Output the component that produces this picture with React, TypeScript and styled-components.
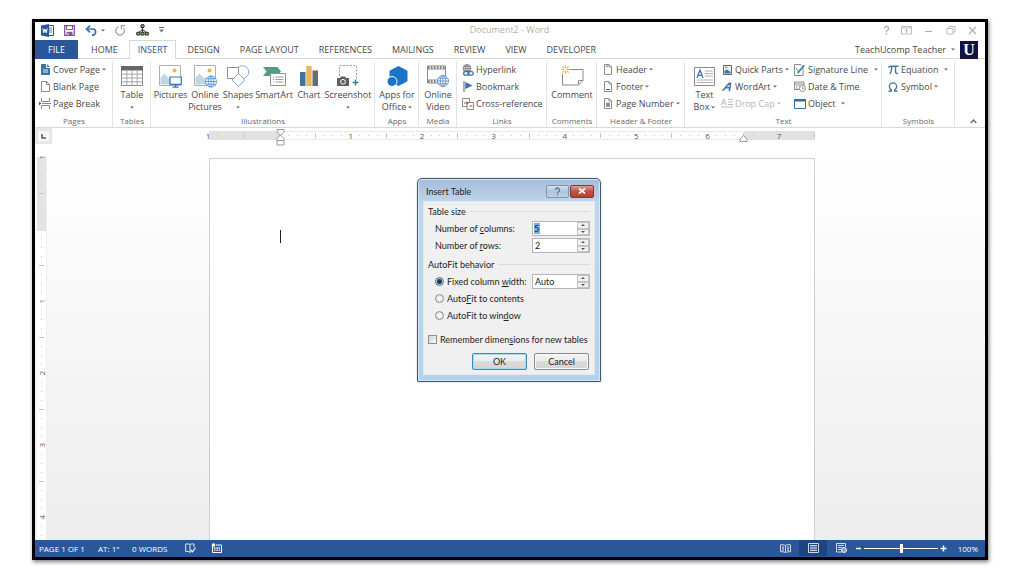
import React from "react";
import styled, { createGlobalStyle } from "styled-components";

const blue = "#2b579a";
const line = "#d8d8d8";
const ink = "#484848";

const Global = createGlobalStyle`
  *, *::before, *::after { box-sizing: border-box; }
  html, body { margin: 0; background: #fff; }
  body, button, input { font-family: "Open Sans", "Noto Sans", sans-serif; font-size: 9px; color: ${ink}; }
  button { border: 0; padding: 0; margin: 0; background: none; white-space: nowrap; }
  svg { display: block; flex: none; }
`;

/* ---------- window ---------- */

const Desk = styled.div`
  min-height: 100vh;
  padding: 19px 36px 16px 32px;
  display: flex;
`;

const Window = styled.div`
  position: relative;
  flex: 1;
  min-width: 0;
  display: flex;
  flex-direction: column;
  border: 3px solid #000;
  background: #fff;
  box-shadow: 1px 2px 4px rgba(0, 0, 0, 0.5);
`;

const TitleBar = styled.header`
  display: grid;
  grid-template-columns: 1fr auto 1fr;
  align-items: center;
  height: 18px;
  padding: 0 7px 2px 6px;
`;

const Title = styled.h1`
  margin: 0;
  font-size: 9px;
  font-weight: 400;
  line-height: 16px;
  color: #b0b0b0;
`;

const QuickAccess = styled.div`
  display: flex;
  align-items: center;
  gap: 10px;
`;

const WindowControls = styled.div`
  display: flex;
  align-items: center;
  justify-content: flex-end;
  gap: 11px;
`;

const IconButton = styled.button`
  display: flex;
  align-items: center;
  gap: 4px;
`;

/* ---------- tabs ---------- */

const TabRow = styled.nav`
  display: flex;
  align-items: stretch;
  height: 19px;
  box-shadow: inset 0 -1px ${line};
`;

const FileTab = styled.button`
  width: 43px;
  margin-right: 4px;
  background: ${blue};
  color: #fff;
  line-height: 17px;
`;

const Tab = styled.button<{ $active?: boolean }>`
  padding: 0 8px;
  margin-right: 2px;
  line-height: 16px;
  border: 1px solid ${(p) => (p.$active ? line : "transparent")};
  border-bottom: 0;
  background: ${(p) => (p.$active ? "#fff" : "none")};
  color: ${(p) => (p.$active ? blue : ink)};
`;

const Account = styled.button`
  display: flex;
  align-items: center;
  gap: 5px;
  margin-left: auto;
  padding-right: 7px;
`;

const Avatar = styled.span`
  display: grid;
  place-items: center;
  width: 18px;
  height: 18px;
  background: #12123f;
  color: #fff;
  font: 700 16px "Liberation Serif", serif;
`;

/* ---------- ribbon ---------- */

const Ribbon = styled.section`
  display: flex;
  height: 69px;
  border-bottom: 1px solid ${line};
`;

const GroupBox = styled.div<{ $w: number }>`
  flex: ${(p) => p.$w} 1 0;
  min-width: 0;
  display: flex;
  flex-direction: column;
  justify-content: space-between;
  margin: 2px 0 0;
  box-shadow: inset -1px 0 #e3e3e3;
`;

const GroupBody = styled.div<{ $center?: boolean; $pad?: number }>`
  display: flex;
  justify-content: ${(p) => (p.$center ? "center" : "flex-start")};
  padding-left: ${(p) => p.$pad ?? 0}px;
`;

const GroupLabel = styled.div`
  text-align: center;
  line-height: 12px;
  font-size: 8px;
  color: #6a6a6a;
  white-space: nowrap;
`;

const Big = styled.button<{ $w: number }>`
  width: ${(p) => p.$w}px;
  display: flex;
  flex-direction: column;
  align-items: center;
  line-height: 12px;
  padding-top: 2px;
`;

const BigIcon = styled.span`
  height: 26px;
  display: flex;
  align-items: center;
`;

const BigLine = styled.span`
  display: flex;
  align-items: center;
  gap: 2px;
  height: 12px;
`;

const Stack = styled.div<{ $w?: number }>`
  display: flex;
  flex-direction: column;
  width: ${(p) => (p.$w ? p.$w + "px" : "auto")};
`;

const Small = styled.button<{ $dim?: boolean }>`
  display: flex;
  align-items: center;
  height: 17px;
  color: ${(p) => (p.$dim ? "#b5b5b5" : ink)};
`;

const SmallIcon = styled.span`
  width: 12px;
  margin-right: 2px;
  display: flex;
  justify-content: center;
`;

const SmallText = styled.span<{ $gap?: number }>`
  margin-right: ${(p) => p.$gap ?? 2}px;
`;

const Collapse = styled.div`
  flex: 30 1 0;
  display: flex;
  align-items: flex-end;
  justify-content: center;
  button { margin: 0 0 3px 7px; }
`;

const Caret = ({ dim }: { dim?: boolean }) => (
  <svg width="4" height="3" viewBox="0 0 4 3" aria-hidden="true">
    <path d="M0 .4h4L2 2.6z" fill={dim ? "#b5b5b5" : "#666"} />
  </svg>
);

/* ---------- rulers and paper ---------- */

const RulerRow = styled.div`
  display: flex;
  height: 17px;
`;

const TabStop = styled.button`
  width: 17px;
  height: 16px;
  display: grid;
  place-items: center;
  border: 3px solid #e6e6e6;
  background: #f8f8f8;
`;

const RulerTrack = styled.div`
  flex: 1;
  display: flex;
  justify-content: center;
  padding-right: 14px;
`;

const HRuler = styled.div`
  position: relative;
  display: flex;
  width: 606px;
  height: 9px;
  margin-top: 3px;
`;

const HPart = styled.div<{ $w: number; $shade?: boolean }>`
  flex: ${(p) => p.$w} 1 0;
  background: ${(p) => (p.$shade ? "#e1e1e1" : "#fff")};
  border: solid #e8e8e8;
  border-width: ${(p) => (p.$shade ? 0 : "1px 0")};
`;

const HScale = styled.div`
  position: absolute;
  inset: 0 -5px;
  display: flex;
`;

const VScale = styled.div`
  position: absolute;
  inset: -4px 0 0;
  display: flex;
  flex-direction: column;
`;

const Mark = styled.span<{ $v?: boolean }>`
  flex: ${(p) => (p.$v ? "0 0 auto" : "1 1 0")};
  height: ${(p) => (p.$v ? "9px" : "auto")};
  width: auto;
  display: flex;
  align-items: center;
  justify-content: center;
  font-size: 8px;
  line-height: 9px;
  color: #555;
`;

const Turned = styled.span`
  writing-mode: vertical-rl;
  transform: rotate(180deg);
`;

const Dot = styled.i<{ $half?: boolean; $v?: boolean }>`
  width: ${(p) => (p.$v && p.$half ? 5 : 1)}px;
  height: ${(p) => (!p.$v && p.$half ? 5 : 1)}px;
  background: #c4c4c4;
`;

const Indent = styled.span<{ $x: number }>`
  position: absolute;
  left: ${(p) => p.$x}px;
  top: -2px;
`;

const Workspace = styled.main`
  flex: 1;
  display: flex;
  padding: 13px 0 0 2px;
  background: linear-gradient(#fff, #fcfcfc 18%, #ededed);
  overflow: hidden;
`;

const VRuler = styled.div`
  position: relative;
  width: 10px;
  margin-top: -1px;
  background: linear-gradient(#e4e4e4 74px, #fff 74px);
  border-right: 1px solid #eee;
`;

const PaperArea = styled.div`
  flex: 1;
  display: flex;
  justify-content: center;
  padding-right: 9px;
`;

const Paper = styled.article`
  width: 606px;
  padding: 71px 70px;
  background: #fff;
  border: solid #cfcfcf;
  border-width: 1px 1px 0;
`;

const Cursor = styled.div`
  width: 1px;
  height: 13px;
  background: #222;
`;

/* ---------- status bar ---------- */

const StatusBar = styled.footer`
  display: flex;
  align-items: center;
  height: 17px;
  padding: 0 7px 1px 4px;
  background: ${blue};
  color: #fff;
  font-size: 8px;
`;

const StatusText = styled.span<{ $w: number; $end?: boolean }>`
  min-width: ${(p) => p.$w}px;
  text-align: ${(p) => (p.$end ? "right" : "left")};
  white-space: nowrap;
`;

const StatusButton = styled.button<{ $on?: boolean }>`
  display: grid;
  place-items: center;
  width: 28px;
  height: 16px;
  background: ${(p) => (p.$on ? "#1e4580" : "none")};
`;

const StatusTools = styled.div`
  display: flex;
  gap: 0;
  button { width: 26px; }
`;

const ZoomTools = styled.div`
  display: flex;
  align-items: center;
  margin-left: auto;
`;

const ZoomSlider = styled.input`
  appearance: none;
  width: 74px;
  height: 9px;
  margin: 0 2px;
  background: linear-gradient(#fff, #fff) center / 100% 1px no-repeat;
  &::-webkit-slider-thumb {
    appearance: none;
    width: 3px;
    height: 9px;
    background: #fff;
  }
`;

/* ---------- dialog ---------- */

const Dialog = styled.form`
  position: absolute;
  top: 156px;
  left: 50%;
  transform: translateX(-50%);
  width: 184px;
  margin-left: -1px;
  padding: 0 5px 6px;
  border: 1px solid #3d5a6a;
  border-radius: 5px 5px 1px 1px;
  background: linear-gradient(#a3bcd9, #c2d6eb 24px, #bcd3e8 60%, #b4d3ea);
  box-shadow: inset 0 0 0 1px #d5e7f5, 0 0 2px rgba(0, 0, 0, 0.25);
  color: #222;
  font-family: Lato, "Open Sans", sans-serif;
  button, input, label { font-family: inherit; color: inherit; }
`;

const DialogTitle = styled.div`
  display: flex;
  align-items: center;
  height: 22px;
  padding: 2px 1px 0 3px;
  gap: 1px;
`;

const DialogName = styled.h2`
  flex: 1;
  margin: 0;
  font-size: 9px;
  font-weight: 400;
`;

const Caption = styled.button<{ $close?: boolean }>`
  display: grid;
  place-items: center;
  width: ${(p) => (p.$close ? 24 : 23)}px;
  height: 13px;
  border: 1px solid ${(p) => (p.$close ? "#7a3a3a" : "#7f96b0")};
  border-radius: 2px;
  background: ${(p) =>
    p.$close ? "linear-gradient(#dba196, #c3513f 50%, #b8402c)" : "linear-gradient(#d3e0ee, #b0c5dc 50%, #bdd0e4)"};
`;

const DialogBody = styled.div`
  background: #f0f0f0;
  border: 1px solid #dfe9f2;
  padding: 1px 4px 4px;
`;

const Section = styled.fieldset`
  border: 0;
  margin: 0 0 2px;
  padding: 0;
  min-width: 0;
`;

const Legend = styled.legend`
  display: flex;
  align-items: center;
  gap: 4px;
  width: 100%;
  padding: 0;
  height: 17px;
  &::after { content: ""; flex: 1; height: 1px; background: #dcdcdc; }
`;

const Field = styled.div`
  display: flex;
  align-items: center;
  height: 17px;
  padding-left: 7px;
`;

const FieldLabel = styled.label`
  flex: 1;
  white-space: nowrap;
`;

const Spin = styled.span`
  display: flex;
  width: 58px;
  height: 15px;
  border: 1px solid #b4b8bd;
  background: #fff;
`;

const SpinInput = styled.input`
  flex: 1;
  min-width: 0;
  border: 0;
  padding: 0 2px;
  background: none;
  outline: 0;
`;

const SelectedInput = styled(SpinInput)`
  flex: none;
  width: 6px;
  padding: 0;
  margin: 1px auto 1px 1px;
  background: #78b0e6;
`;

const SpinButtons = styled.span`
  display: flex;
  flex-direction: column;
  width: 12px;
  button {
    flex: 1;
    display: grid;
    place-items: center;
    border: 1px solid #c4c4c4;
    background: #f1f1f1;
  }
`;

const Radio = styled.input`
  appearance: none;
  width: 9px;
  height: 9px;
  margin: 0 3px 0 0;
  border: 1px solid #8e8f8f;
  border-radius: 50%;
  background: radial-gradient(#fff, #d5d5d5);
  &:checked {
    border-color: #4e6a80;
    background: radial-gradient(circle, #1c3c50 0 2px, #a9cfe0 3px, #e6eef2 4px);
  }
`;

const Check = styled.input`
  appearance: none;
  width: 9px;
  height: 9px;
  margin: 0 3px 0 0;
  border: 1px solid #8e8f8f;
  background: linear-gradient(135deg, #cfd3d8, #fafafa);
`;

const CheckRow = styled.div`
  display: flex;
  align-items: center;
  height: 17px;
  margin-top: 7px;
`;

const Actions = styled.div`
  display: flex;
  justify-content: flex-end;
  gap: 7px;
  margin: 5px 1px 0 0;
`;

const PushButton = styled.button<{ $primary?: boolean }>`
  width: 55px;
  height: 17px;
  border: 1px solid ${(p) => (p.$primary ? "#3c8db8" : "#8a8a8a")};
  border-radius: 2px;
  background: linear-gradient(#f4f4f4, #ebebeb 50%, #dcdcdc 50%, #d4d4d4);
  box-shadow: inset 0 0 0 1px ${(p) => (p.$primary ? "#a3dcf3" : "#f8f8f8")};
`;

/* ---------- icons ---------- */

const G = "#8a8a8a";
const B = "#3b6fae";

const Svg = ({ w, h = w, children }: { w: number; h?: number; children: React.ReactNode }) => (
  <svg width={w} height={h} viewBox={`0 0 ${w} ${h}`} fill="none" aria-hidden="true">
    {children}
  </svg>
);

const Globe = ({ x, y, r, c = "#4a8ccb" }: { x: number; y: number; r: number; c?: string }) => (
  <g stroke={c} strokeWidth="0.8">
    <circle cx={x} cy={y} r={r} fill="#fff" />
    <ellipse cx={x} cy={y} rx={r / 2} ry={r} />
    <path d={`M${x - r} ${y}h${2 * r}M${x} ${y - r}v${2 * r}M${x - r * 0.85} ${y - r / 2}h${r * 1.7}M${x - r * 0.85} ${y + r / 2}h${r * 1.7}`} />
  </g>
);

const WordLogo = () => (
  <Svg w={13}>
    <path d="M7 1.5h5.5v10H7z" fill="#fff" stroke={blue} />
    <path d="M8 4h3M8 6h3M8 8h3" stroke={blue} strokeWidth=".8" />
    <path d="M0 1.5 8 0v13l-8-1.500z" fill={blue} />
    <path d="m1.800 4.500 1 4.300L4 5l1.200 3.800 1-4.300" stroke="#fff" />
  </Svg>
);
const Save = () => (
  <Svg w={11}>
    <path d="M.7.7h9.600v9.600H.7z" stroke="#8a4f9e" strokeWidth="1.300" />
    <path d="M2.500 1v3.500h6V1" stroke="#8a4f9e" />
    <path d="M2.500 10V6.800h6V10z" fill="#8a4f9e" />
    <path d="M4 8v2" stroke="#fff" />
  </Svg>
);
const Undo = () => (
  <Svg w={12} h={11}>
    <path d="M1.500 4h6a3 3 0 0 1 0 6.200H7" stroke={B} strokeWidth="1.700" />
    <path d="M5 .7 1.500 4 5 7.300" stroke={B} strokeWidth="1.700" />
  </Svg>
);
const Redo = () => (
  <Svg w={11}>
    <path d="M3.500 1.700A4.300 4.300 0 1 0 8.500 3.200" stroke="#9a9a9a" strokeWidth="1.200" />
    <path d="M6 .6h4M6.300.8v3.700" stroke="#9a9a9a" strokeWidth="1.200" />
  </Svg>
);
const Org = () => (
  <Svg w={13} h={12}>
    <path d="M6.500 4v2M6.500 5.500 2.500 8.500M6.500 5.500l4 3M6.500 6v2.500" stroke="#333" />
    <path d="M5 .8h3v2.700H5zM.8 8.300h3V11h-3zM5 8.300h3V11H5zM9.300 8.300h3V11h-3z" fill="#9bbf6a" stroke="#222" />
  </Svg>
);
const Customize = () => (
  <Svg w={5} h={6}>
    <path d="M0 .5h5" stroke="#666" />
    <path d="M0 2.500h5L2.500 5.500z" fill="#777" />
  </Svg>
);

const CoverIcon = () => (
  <Svg w={9} h={11}>
    <path d="M.5.5h5.300L8.500 3v7.500h-8z" fill={B} stroke={B} />
    <path d="M5.500 0v3.500H9" stroke="#fff" />
    <path d="M2 6h5M2 8h5" stroke="#fff" strokeWidth=".9" />
  </Svg>
);
const BlankIcon = () => (
  <Svg w={9} h={11}>
    <path d="M.5.5h5l3 3v7h-8zM5.500.5v3h3" stroke={G} />
  </Svg>
);
const BreakIcon = () => (
  <Svg w={12} h={11}>
    <path d="M2.500 0v3.500h8V0M2.500 11V7.500h8V11M3 5.500h9" stroke={G} />
    <path d="m0 3.500 2.300 2L0 7.500z" fill="#555" />
  </Svg>
);
const TableIcon = () => (
  <Svg w={22} h={20}>
    <path d="M.5.500h21v19H.5z" fill="#fff" stroke={G} />
    <path d="M0 0h22v4.500H0z" fill="#666" />
    <path d="M.5 8.200h21M.5 12h21M.5 15.800h21M5.800 4v16M11 4v16M16.200 4v16" stroke="#a5a5a5" />
  </Svg>
);
const photo = (
  <>
    <path d="M.5.500h21v20H.5z" fill="#fff" stroke="#b0b0b0" />
    <circle cx="15.500" cy="5.500" r="2" fill="#e8b64c" />
    <path d="M1.500 19.500v-7l4-4 4.500 5 2-1.500v7.500z" fill="#bfd5e8" />
  </>
);
const PicturesIcon = () => (
  <Svg w={23} h={23}>
    {photo}
    <path d="M11 12h11.300v7.300H11z" fill="#fff" stroke={B} strokeWidth="1.200" />
    <path d="M16.600 19.500V22M13.500 22.200h6" stroke={B} strokeWidth="1.200" />
  </Svg>
);
const OnlinePicturesIcon = () => (
  <Svg w={23} h={23}>
    {photo}
    <Globe x={17} y={16.5} r={5.500} />
  </Svg>
);
const ShapesIcon = () => (
  <Svg w={23} h={23}>
    <circle cx="15.500" cy="7" r="6.300" fill="#fff" stroke="#8aa9cc" />
    <path d="M.5 2.500h11v11H.5z" fill="#fff" stroke="#909090" />
    <path d="m11.500 8.500 6.300 6.500-6.300 6.500L5.200 15z" fill="#fff" stroke="#7fa5cf" />
  </Svg>
);
const SmartArtIcon = () => (
  <Svg w={23} h={20}>
    <path d="M0 1h14.500l3.500 4.500-3.500 4.500H0l3.500-4.500z" fill="#4ea083" />
    <path d="M7.500 7.500h15v12h-15z" fill="#fff" stroke="#909090" />
    <path d="M10 11h1m1.500 0h8M10 13.500h1m1.500 0h8M10 16h1m1.500 0h8" stroke="#999" />
  </Svg>
);
const ChartIcon = () => (
  <Svg w={18} h={20}>
    <path d="M0 6h5.500v14H0z" fill="#44729f" />
    <path d="M6.200 0h5.500v20H6.200z" fill="#e6b665" />
    <path d="M12.500 4.500H18V20h-5.500z" fill="#6b6b6b" />
  </Svg>
);
const ScreenshotIcon = () => (
  <Svg w={22} h={22}>
    <path d="M2.500 11V.5h17V14" stroke="#9a9a9a" strokeDasharray="2 1.500" />
    <path d="M0 13h3l1-1.500h4L9 13h3v8H0z" fill="#5f5f5f" />
    <circle cx="6" cy="16.800" r="2.400" stroke="#fff" />
    <path d="M18.500 14.500v6M15.500 17.500h6" stroke="#2f8577" strokeWidth="1.500" />
  </Svg>
);
const AppsIcon = () => (
  <Svg w={21} h={21}>
    <path d="m11.500 0 9 4.800v10.400l-9 4.800-9-4.800V4.800z" fill="#1a74c8" />
    <circle cx="5" cy="15.500" r="5" fill="#1a74c8" stroke="#fff" />
  </Svg>
);
const VideoIcon = () => (
  <Svg w={22} h={22}>
    <path d="M.5 1h18v17H.5zM.5 4h18M.5 15h18" stroke={G} />
    <path d="M1 2.500h17.500M1 16.500h17.500" stroke="#666" strokeWidth="2" strokeDasharray="1.500 1.500" />
    <Globe x={16} y={16} r={5.500} />
  </Svg>
);
const LinkIcon = () => (
  <Svg w={12} h={12}>
    <Globe x={5} y={4.5} r={4} c="#777" />
    <rect x="1.600" y="7.600" width="5.500" height="3.600" rx="1.800" stroke={B} strokeWidth="1.300" fill="#fff" />
    <rect x="5.800" y="7.600" width="5.500" height="3.600" rx="1.800" stroke={B} strokeWidth="1.300" />
  </Svg>
);
const FlagIcon = () => (
  <Svg w={10} h={11}>
    <path d="M1 0v11" stroke="#777" strokeWidth="1.200" />
    <path d="M2.300 1 9.500 4.500 2.300 8z" fill={B} />
  </Svg>
);
const CrossIcon = () => (
  <Svg w={12} h={12}>
    <path d="M.5.5h7v8h-7z" fill="#fff" stroke="#888" />
    <path d="M5 4.500h6.500v7H5z" fill="#fff" stroke="#888" />
    <path d="M2 5h4M4.500 3.500 6.200 5 4.500 6.500M7.500 8h3" stroke="#a8484f" />
  </Svg>
);
const CommentIcon = () => (
  <Svg w={23} h={22}>
    <path d="M8 4.500h14v11L17.500 20H1.500V9" stroke="#8a8a8a" />
    <path d="M22 15.500h-4.500V20" stroke="#8a8a8a" />
    <path d="M4.500 0v9M0 4.500h9M1.300 1.300l6.400 6.400M7.700 1.300 1.300 7.700" stroke="#e9b558" strokeWidth="1.200" />
    <circle cx="4.500" cy="4.500" r="1.500" fill="#fff" />
  </Svg>
);
const HfIcon = ({ kind }: { kind: "h" | "f" | "n" }) => (
  <Svg w={8} h={11}>
    <path d="M.5.5H5L7.500 3v7.500h-7zM5 .5V3h2.500" stroke={G} />
    {kind === "h" && <path d="M2 2.200h2" stroke={B} />}
    {kind === "f" && <path d="M2 8.500h4" stroke={B} />}
    {kind === "n" && <path d="M3 4.500v4.500M5 4.500v4.500M2 6h4M2 7.800h4" stroke="#555" strokeWidth=".8" />}
  </Svg>
);
const TextBoxIcon = () => (
  <Svg w={21} h={19}>
    <path d="M.5.500h20v18H.5z" fill="#fff" stroke="#8a8a8a" />
    <path d="m3 11 3-8 3 8M4 8.300h4" stroke={B} strokeWidth="1.300" />
    <path d="M11 4h8M11 6.500h8M11 9h8M3 13h16M3 15.500h16" stroke="#b0b0b0" />
  </Svg>
);
const PartsIcon = () => (
  <Svg w={9} h={10}>
    <path d="M.5.500h8v9h-8z" fill="#eee" stroke="#666" />
    <path d="M2 2.500h2.500" stroke="#d69a3a" strokeWidth="1.500" />
    <path d="M1.500 8.500V6L4 4.500 7.500 7v1.500z" fill={B} />
  </Svg>
);
const WordArtIcon = () => (
  <Svg w={10} h={10}>
    <path d="M0 8.500 6.500.8 9.500.5 8 9.500l-1.500-.7.5-2.300H3.500L1.500 9zM4.500 5h2.800l.5-2.500z" fill={B} fillRule="evenodd" />
  </Svg>
);
const DropIcon = () => (
  <Svg w={12} h={11}>
    <path d="M.5 7 2.800 1l2.300 6M1.300 5h3M7 1.500h5M7 4h5M7 6.500h5M0 9h12" stroke="#bbb" />
  </Svg>
);
const SignIcon = () => (
  <Svg w={12} h={12}>
    <path d="M.5.500h6.500l2 2V11.500H.5z" fill="#fff" stroke={G} />
    <path d="m11 1.500-6 7.500-2 .8.500-2L9.500.8z" fill="#3f8a9e" />
    <path d="m2 4 2 3" stroke="#4f9a72" />
  </Svg>
);
const DateIcon = () => (
  <Svg w={12} h={11}>
    <path d="M.5 1h9.500v7.500H.5zM.5 3h9.500" stroke={G} />
    <path d="M2 5h1.500M4.500 5H6M2 7h1.500" stroke="#b07a3a" />
    <circle cx="8.500" cy="7.500" r="3" fill="#fff" stroke={G} />
    <path d="M8.500 6v1.700H10" stroke={G} />
  </Svg>
);
const ObjectIcon = () => (
  <Svg w={12} h={10}>
    <path d="M.5.500h11v9H.5z" fill="#fff" stroke={B} />
    <path d="M0 0h12v2.500H0z" fill="#2f6f9f" />
  </Svg>
);
const PiIcon = () => (
  <Svg w={11} h={10}>
    <path d="M.5 2.800C1.200 1.300 2 1.200 3 1.200h7.500M3.800 1.500c0 3-.5 5.500-2 7.500M7.500 1.500v5.500c0 1.500 1.200 2 2.500 1" stroke="#44789f" strokeWidth="1.400" />
  </Svg>
);
const OmegaIcon = () => (
  <Svg w={10} h={10}>
    <path d="M.5 9h3V7.800C1.800 7 1.300 5.800 1.300 4.500a3.700 3.700 0 0 1 7.400 0c0 1.300-.5 2.500-2.200 3.300V9h3" stroke="#44789f" strokeWidth="1.300" />
  </Svg>
);

/* ---------- parts ---------- */

const Group = ({ w, name, pad, center, children }: { w: number; name: string; pad?: number; center?: boolean; children: React.ReactNode }) => (
  <GroupBox $w={w}>
    <GroupBody $pad={pad} $center={center}>{children}</GroupBody>
    <GroupLabel>{name}</GroupLabel>
  </GroupBox>
);

const BigButton = ({ w, icon, a, b, caret }: { w: number; icon: React.ReactNode; a: string; b?: string; caret?: boolean }) => (
  <Big type="button" $w={w}>
    <BigIcon>{icon}</BigIcon>
    <BigLine>{a}</BigLine>
    {(b || caret) && <BigLine>{b}{caret && <Caret />}</BigLine>}
  </Big>
);

const SmallButton = ({ icon, text, caret, gap, dim }: { icon: React.ReactNode; text: string; caret?: boolean; gap?: number; dim?: boolean }) => (
  <Small type="button" $dim={dim}>
    <SmallIcon>{icon}</SmallIcon>
    <SmallText $gap={gap}>{text}</SmallText>
    {caret && <Caret dim={dim} />}
  </Small>
);

const Scale = ({ labels, v }: { labels: string[]; v?: boolean }) => (
  <>
    {labels.flatMap((label, i) =>
      Array.from({ length: i === labels.length - 1 && !v ? 5 : 8 }, (_, k) => (
        <Mark key={`${i}-${k}`} $v={v}>
          {k === 0 ? (v ? <Turned>{label}</Turned> : label) : <Dot $half={k === 4} $v={v} />}
        </Mark>
      ))
    )}
  </>
);

const Spinner = ({ id, label, value, selected }: { id: string; label?: string; value: string; selected?: boolean }) => {
  const Box = selected ? SelectedInput : SpinInput;
  return (
    <Spin>
      <Box id={id} aria-label={label} defaultValue={value} />
      <SpinButtons>
        <button type="button" aria-label="Increase">
          <Svg w={4} h={2}><path d="M0 2h4L2 0z" fill="#555" /></Svg>
        </button>
        <button type="button" aria-label="Decrease">
          <Svg w={4} h={2}><path d="M0 0h4L2 2z" fill="#555" /></Svg>
        </button>
      </SpinButtons>
    </Spin>
  );
};

const tabs = ["HOME", "INSERT", "DESIGN", "PAGE LAYOUT", "REFERENCES", "MAILINGS", "REVIEW", "VIEW", "DEVELOPER"];

const InsertTableDialog = () => (
  <Dialog role="dialog" aria-label="Insert Table" onSubmit={(e) => e.preventDefault()}>
    <DialogTitle>
      <DialogName>Insert Table</DialogName>
      <Caption type="button" aria-label="Help">
        <Svg w={7} h={9}>
          <path d="M1.500 3a2 2 0 1 1 3 1.700c-.8.500-1 .8-1 1.500M3.500 7v1.500" stroke="#60748c" strokeWidth="1.300" />
        </Svg>
      </Caption>
      <Caption type="button" $close aria-label="Close">
        <Svg w={8} h={6}><path d="m1 .5 6 5M7 .5l-6 5" stroke="#fff" strokeWidth="1.700" /></Svg>
      </Caption>
    </DialogTitle>
    <DialogBody>
      <Section>
        <Legend>Table size</Legend>
        <Field>
          <FieldLabel htmlFor="cols">Number of <u>c</u>olumns:</FieldLabel>
          <Spinner id="cols" value="5" selected />
        </Field>
        <Field>
          <FieldLabel htmlFor="rows">Number of <u>r</u>ows:</FieldLabel>
          <Spinner id="rows" value="2" />
        </Field>
      </Section>
      <Section>
        <Legend>AutoFit behavior</Legend>
        <Field>
          <Radio type="radio" name="fit" id="fixed" defaultChecked />
          <FieldLabel htmlFor="fixed">Fixed column <u>w</u>idth:</FieldLabel>
          <Spinner id="width" label="Column width" value="Auto" />
        </Field>
        <Field>
          <Radio type="radio" name="fit" id="contents" />
          <FieldLabel htmlFor="contents">Auto<u>F</u>it to contents</FieldLabel>
        </Field>
        <Field>
          <Radio type="radio" name="fit" id="window" />
          <FieldLabel htmlFor="window">AutoFit to win<u>d</u>ow</FieldLabel>
        </Field>
      </Section>
      <CheckRow>
        <Check type="checkbox" id="remember" />
        <FieldLabel htmlFor="remember">Remember dimen<u>s</u>ions for new tables</FieldLabel>
      </CheckRow>
      <Actions>
        <PushButton type="submit" $primary>OK</PushButton>
        <PushButton type="button">Cancel</PushButton>
      </Actions>
    </DialogBody>
  </Dialog>
);

export default function App() {
  return (
    <Desk>
      <Global />
      <Window>
        <TitleBar>
          <QuickAccess>
            <WordLogo />
            <IconButton type="button" aria-label="Save"><Save /></IconButton>
            <IconButton type="button" aria-label="Undo"><Undo /><Caret /></IconButton>
            <IconButton type="button" aria-label="Repeat"><Redo /></IconButton>
            <IconButton type="button" aria-label="Hierarchy"><Org /></IconButton>
            <IconButton type="button" aria-label="Customize"><Customize /></IconButton>
          </QuickAccess>
          <Title>Document2 - Word</Title>
          <WindowControls>
            <IconButton type="button" aria-label="Help">
              <Svg w={7} h={9}><path d="M1.500 2.500a2 2 0 1 1 3 1.700c-.8.500-1 .8-1 1.800M3.500 7v1.500" stroke="#aaa" strokeWidth="1.200" /></Svg>
            </IconButton>
            <IconButton type="button" aria-label="Ribbon options">
              <Svg w={11} h={9}><path d="M.5.500h10v7.500H.5zM.5 2h10M5.500 7V3.500M3.800 5l1.700-1.500L7.200 5" stroke="#bbb" /></Svg>
            </IconButton>
            <IconButton type="button" aria-label="Minimize">
              <Svg w={11} h={9}><path d="M2 5.500h7" stroke="#aaa" /></Svg>
            </IconButton>
            <IconButton type="button" aria-label="Restore">
              <Svg w={11} h={9}><path d="M2 2.500h6v5.500H2zM4 2.500v-2h6V6H8" stroke="#bbb" /></Svg>
            </IconButton>
            <IconButton type="button" aria-label="Close window">
              <Svg w={11} h={9}><path d="m2 1 7 7M9 1 2 8" stroke="#aaa" strokeWidth="1.100" /></Svg>
            </IconButton>
          </WindowControls>
        </TitleBar>

        <TabRow>
          <FileTab type="button">FILE</FileTab>
          {tabs.map((t) => (
            <Tab key={t} type="button" $active={t === "INSERT"}>{t}</Tab>
          ))}
          <Account type="button">
            TeachUcomp Teacher
            <Caret />
            <Avatar>U</Avatar>
          </Account>
        </TabRow>

        <Ribbon>
          <Group w={78} name="Pages" pad={4}>
            <Stack>
              <SmallButton icon={<CoverIcon />} text="Cover Page" caret />
              <SmallButton icon={<BlankIcon />} text="Blank Page" />
              <SmallButton icon={<BreakIcon />} text="Page Break" />
            </Stack>
          </Group>
          <Group w={38} name="Tables" center>
            <BigButton w={34} icon={<TableIcon />} a="Table" caret />
          </Group>
          <Group w={224} name="Illustrations" pad={2}>
            <BigButton w={35} icon={<PicturesIcon />} a="Pictures" />
            <BigButton w={34} icon={<OnlinePicturesIcon />} a="Online" b="Pictures" />
            <BigButton w={32} icon={<ShapesIcon />} a="Shapes" caret />
            <BigButton w={40} icon={<SmartArtIcon />} a="SmartArt" />
            <BigButton w={30} icon={<ChartIcon />} a="Chart" />
            <BigButton w={48} icon={<ScreenshotIcon />} a="Screenshot" caret />
          </Group>
          <Group w={44} name="Apps" center>
            <BigButton w={40} icon={<AppsIcon />} a="Apps for" b="Office" caret />
          </Group>
          <Group w={38} name="Media" center>
            <BigButton w={34} icon={<VideoIcon />} a="Online" b="Video" />
          </Group>
          <Group w={90} name="Links" pad={5}>
            <Stack>
              <SmallButton icon={<LinkIcon />} text="Hyperlink" />
              <SmallButton icon={<FlagIcon />} text="Bookmark" />
              <SmallButton icon={<CrossIcon />} text="Cross-reference" />
            </Stack>
          </Group>
          <Group w={50} name="Comments" center>
            <BigButton w={46} icon={<CommentIcon />} a="Comment" />
          </Group>
          <Group w={88} name="Header &amp; Footer" pad={5}>
            <Stack>
              <SmallButton icon={<HfIcon kind="h" />} text="Header" caret />
              <SmallButton icon={<HfIcon kind="f" />} text="Footer" caret />
              <SmallButton icon={<HfIcon kind="n" />} text="Page Number" caret />
            </Stack>
          </Group>
          <Group w={197} name="Text" pad={3}>
            <BigButton w={33} icon={<TextBoxIcon />} a="Text" b="Box" caret />
            <Stack $w={73}>
              <SmallButton icon={<PartsIcon />} text="Quick Parts" caret />
              <SmallButton icon={<WordArtIcon />} text="WordArt" caret />
              <SmallButton icon={<DropIcon />} text="Drop Cap" caret dim />
            </Stack>
            <Stack>
              <SmallButton icon={<SignIcon />} text="Signature Line" caret gap={6} />
              <SmallButton icon={<DateIcon />} text="Date &amp; Time" />
              <SmallButton icon={<ObjectIcon />} text="Object" caret gap={6} />
            </Stack>
          </Group>
          <Group w={73} name="Symbols" pad={5}>
            <Stack>
              <SmallButton icon={<PiIcon />} text="Equation" caret gap={6} />
              <SmallButton icon={<OmegaIcon />} text="Symbol" caret />
            </Stack>
          </Group>
          <Collapse>
            <IconButton type="button" aria-label="Collapse ribbon">
              <Svg w={7} h={5}><path d="m.7 4 2.800-3 2.800 3" stroke="#666" strokeWidth="1.300" /></Svg>
            </IconButton>
          </Collapse>
        </Ribbon>

        <RulerRow>
          <TabStop type="button" aria-label="Tab stop">
            <Svg w={5} h={5}><path d="M1 0v4h4" stroke="#555" strokeWidth="1.500" /></Svg>
          </TabStop>
          <RulerTrack>
            <HRuler>
              <HPart $w={71} $shade />
              <HPart $w={464} />
              <HPart $w={71} $shade />
              <HScale><Scale labels={["1", "", "1", "2", "3", "4", "5", "6", "7"]} /></HScale>
              <Indent $x={67}>
                <Svg w={9} h={17}>
                  <path d="M1 .5h7V3L4.500 6.500 1 3zM1 11.500V9.500L4.500 6 8 9.500v2zM1 11.500h7v4.500H1z" fill="#fff" stroke="#999" />
                </Svg>
              </Indent>
              <Indent $x={530}>
                <Svg w={9} h={17}>
                  <path d="M1 12.500V10l3.500-3.500L8 10v2.500z" fill="#fff" stroke="#999" />
                </Svg>
              </Indent>
            </HRuler>
          </RulerTrack>
        </RulerRow>

        <Workspace>
          <VRuler>
            <VScale><Scale v labels={["1", "", "1", "2", "3", "4"]} /></VScale>
          </VRuler>
          <PaperArea>
            <Paper aria-label="Document">
              <Cursor />
            </Paper>
          </PaperArea>
        </Workspace>

        <StatusBar>
          <StatusText $w={59}>PAGE 1 OF 1</StatusText>
          <StatusText $w={34}>AT: 1"</StatusText>
          <StatusText $w={45}>0 WORDS</StatusText>
          <StatusTools>
            <StatusButton type="button" aria-label="Proofing">
              <Svg w={11} h={10}>
                <path d="M5 1.500C4 .8 2.500.8.7 1v7.500c1.800-.2 3.300 0 4.300.8zM5 1.500C6 .8 7 .8 9 1v3M5 9.300l1-.5" stroke="#dfe8f5" />
                <path d="m6 7 1.500 1.800L10.500 4.500" stroke="#fff" strokeWidth="1.200" />
              </Svg>
            </StatusButton>
            <StatusButton type="button" aria-label="Macro recording">
              <Svg w={11} h={10}>
                <path d="M1.500 3v6.500h9V2H5" stroke="#fff" />
                <circle cx="2.500" cy="2" r="1.800" fill="#fff" />
                <path d="M3 5h6M3 7.200h6" stroke="#fff" strokeDasharray="1.500 .8" strokeWidth="1.300" />
              </Svg>
            </StatusButton>
          </StatusTools>
          <ZoomTools>
            <StatusButton type="button" aria-label="Read mode">
              <Svg w={11} h={9}>
                <path d="M5.500 1.500C4 .5 2.500.5.5.8v7c2-.2 3.500 0 5 1 1.500-1 3-1.200 5-1v-7c-2-.3-3.500-.3-5 .7zM5.500 1.500v7M2 3h2M2 4.700h2M2 6.300h2M7 3h2M7 4.700h2M7 6.300h2" stroke="#dfe8f5" strokeWidth=".9" />
              </Svg>
            </StatusButton>
            <StatusButton type="button" $on aria-label="Print layout">
              <Svg w={11} h={10}><path d="M.5.500h10v9H.5zM2 2.500h7M2 4.200h7M2 5.900h7M2 7.600h7" stroke="#dfe8f5" strokeWidth=".9" /></Svg>
            </StatusButton>
            <StatusButton type="button" aria-label="Web layout">
              <Svg w={11} h={10}>
                <path d="M6 9H.5V.500h9V4M2 2.500h6M2 4.500h4M2 6.500h3" stroke="#dfe8f5" strokeWidth=".9" />
                <circle cx="8" cy="7" r="2.500" fill="#7fa0cf" stroke="#fff" strokeWidth=".9" />
              </Svg>
            </StatusButton>
            <IconButton type="button" aria-label="Zoom out">
              <Svg w={7}><path d="M1 3.500h5" stroke="#fff" strokeWidth="1.500" /></Svg>
            </IconButton>
            <ZoomSlider type="range" aria-label="Zoom" min={10} max={190} defaultValue={100} />
            <IconButton type="button" aria-label="Zoom in">
              <Svg w={7}><path d="M.5 3.500h6M3.500.5v6" stroke="#fff" strokeWidth="1.500" /></Svg>
            </IconButton>
            <StatusText $w={31} $end>100%</StatusText>
          </ZoomTools>
        </StatusBar>

        <InsertTableDialog />
      </Window>
    </Desk>
  );
}
